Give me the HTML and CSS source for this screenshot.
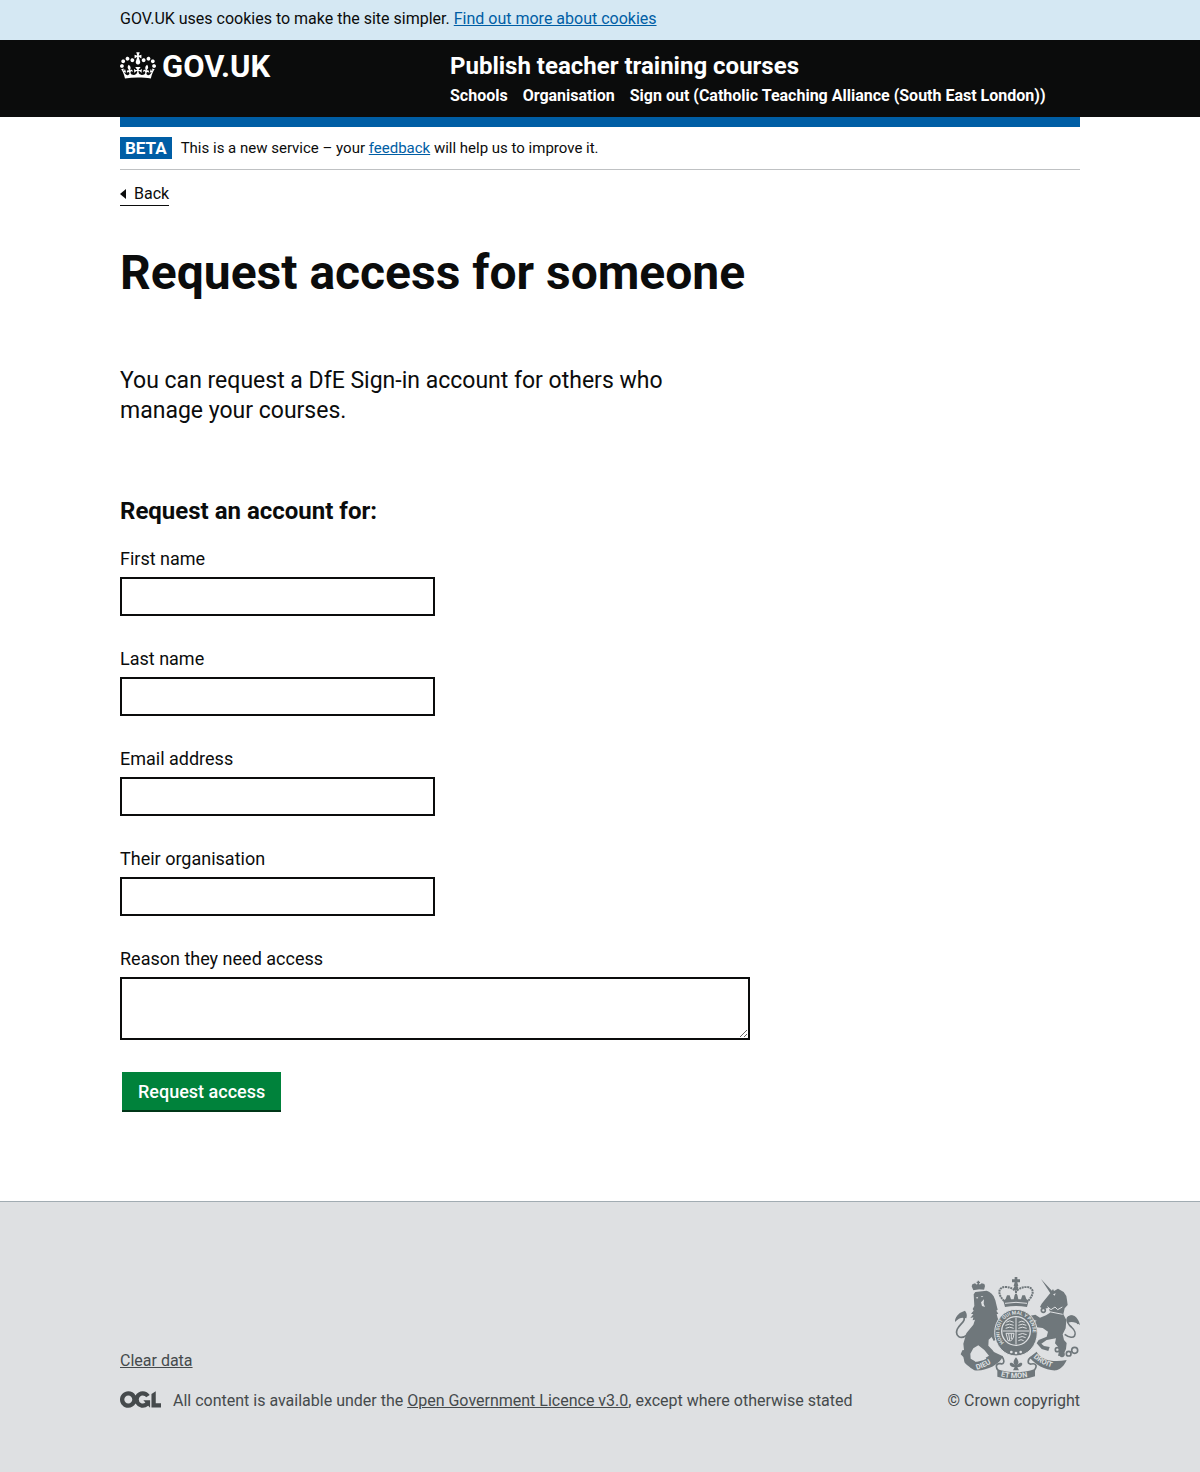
FILE: index.html
```html
<!DOCTYPE html>
<html lang="en">
<head>
<meta charset="utf-8">
<meta name="viewport" content="width=device-width, initial-scale=1">
<title>Request access for someone</title>
<link rel="stylesheet" href="styles.css">
</head>
<body>
<div class="cookie-banner">
  <p class="container">GOV.UK uses cookies to make the site simpler. <a class="link" href="#cookies">Find out more about cookies</a></p>
</div>
<header class="header">
  <div class="container header-grid">
    <a class="logo" href="#home">
      <svg class="crown" viewBox="0 0 132 97" aria-hidden="true"><path fill="currentColor" fill-rule="evenodd" d="M25 30.2c3.5 1.5 7.7-.2 9.1-3.7 1.5-3.6-.2-7.8-3.9-9.2-3.6-1.4-7.6.3-9.1 3.9-1.4 3.5.3 7.5 3.9 9zM9 39.5c3.6 1.5 7.8-.2 9.2-3.7 1.5-3.6-.2-7.8-3.9-9.1-3.6-1.5-7.6.2-9.1 3.8-1.4 3.5.3 7.5 3.8 9zM4.4 57.2c3.5 1.5 7.7-.2 9.1-3.8 1.5-3.6-.2-7.7-3.9-9.1-3.5-1.5-7.6.3-9.1 3.8-1.4 3.5.3 7.6 3.9 9.1zm38.3-21.4c3.5 1.5 7.7-.2 9.1-3.8 1.5-3.6-.2-7.7-3.9-9.1-3.6-1.5-7.6.3-9.1 3.8-1.3 3.6.4 7.7 3.9 9.1zm64.4-5.6c-3.6 1.5-7.8-.2-9.1-3.7-1.5-3.6.2-7.8 3.8-9.2 3.6-1.4 7.7.3 9.2 3.9 1.3 3.5-.4 7.5-3.9 9zm15.9 9.3c-3.6 1.5-7.7-.2-9.1-3.7-1.5-3.6.2-7.8 3.7-9.1 3.6-1.5 7.7.2 9.2 3.8 1.5 3.5-.3 7.5-3.8 9zm4.7 17.7c-3.6 1.5-7.8-.2-9.2-3.8-1.5-3.6.2-7.7 3.9-9.1 3.6-1.5 7.7.3 9.2 3.8 1.3 3.5-.4 7.6-3.9 9.1zM89.3 35.8c-3.6 1.5-7.8-.2-9.2-3.8-1.4-3.6.2-7.7 3.9-9.1 3.6-1.5 7.7.3 9.2 3.8 1.4 3.6-.3 7.7-3.9 9.1zM69.7 17.7l8.9 4.7V9.3l-8.9 2.8c-.2-.3-.5-.6-.9-.9L72.4 0H59.6l3.5 11.2c-.3.3-.6.5-.9.9l-8.8-2.8v13.1l8.8-4.7c.3.3.6.7.9.9l-5 15.4v.1c-.2.8-.4 1.6-.4 2.4 0 4.1 3.1 7.5 7 8.1h.2c.3 0 .7.1 1 .1.4 0 .7 0 1-.1h.2c4-.6 7.1-4.1 7.1-8.1 0-.8-.1-1.7-.4-2.4V34l-5.1-15.4c.4-.2.7-.6 1-.9zM66 92.8c16.9 0 32.8 1.1 47.1 3.2 4-16.9 8.9-26.7 14-33.5l-9.6-3.4c1 4.9 1.1 7.2 0 10.2-1.5-1.4-3-4.3-4.2-8.7L108.6 76c2.8-2 5-3.2 7.5-3.3-4.4 9.4-10 11.9-13.6 11.2-4.3-.8-6.3-4.6-5.6-7.9 1-4.7 5.7-5.9 8-.5 4.3-8.7-3-11.4-7.6-8.8 7.1-7.2 7.9-13.5 2.1-21.1-8 6.1-8.1 12.3-4.5 20.8-4.7-5.4-12.1-2.5-9.5 6.2 3.4-5.2 7.9-2 7.2 3.1-.6 4.3-6.4 7.8-13.5 7.2-10.3-.9-10.9-8-11.2-13.8 2.5-.5 7.1 1.8 11 7.3L80.2 60c-4.1 4.4-8 5.3-12.3 5.4 1.4-4.4 8-11.6 8-11.6H55.5s6.4 7.2 7.9 11.6c-4.2-.1-8-1-12.3-5.4l1.4 16.4c3.9-5.5 8.5-7.7 10.9-7.3-.3 5.8-.9 12.8-11.1 13.8-7.2.6-12.9-2.9-13.5-7.2-.7-5 3.8-8.3 7.1-3.1 2.7-8.7-4.6-11.6-9.4-6.2 3.7-8.5 3.6-14.7-4.6-20.8-5.8 7.6-5 13.9 2.2 21.1-4.7-2.6-11.9.1-7.7 8.8 2.3-5.5 7.1-4.2 8.1.5.7 3.3-1.3 7.1-5.7 7.9-3.5.7-9-1.8-13.5-11.2 2.5.1 4.7 1.3 7.5 3.3l-4.7-15.4c-1.2 4.4-2.7 7.2-4.3 8.7-1.1-3-.9-5.3 0-10.2l-9.5 3.4c5 6.9 9.9 16.7 14 33.5 14.8-2.1 30.8-3.2 47.7-3.2z"/></svg>
      <span>GOV.UK</span>
    </a>
    <div>
      <a class="service-name" href="#service">Publish teacher training courses</a>
      <nav class="nav" aria-label="Service">
        <a href="#schools">Schools</a>
        <a href="#organisation">Organisation</a>
        <a href="#sign-out">Sign out (Catholic Teaching Alliance (South East London))</a>
      </nav>
    </div>
  </div>
</header>
<div class="container">
  <div class="phase-banner">
    <strong class="tag">BETA</strong>
    <span>This is a new service – your <a class="link" href="#feedback">feedback</a> will help us to improve it.</span>
  </div>
  <a class="back-link" href="#back">Back</a>
  <main class="main">
    <h1>Request access for someone</h1>
    <p class="lead">You can request a DfE Sign-in account for others who manage your courses.</p>
    <form>
      <h2>Request an account for:</h2>
      <div class="field"><label for="first-name">First name</label><input id="first-name" type="text"></div>
      <div class="field"><label for="last-name">Last name</label><input id="last-name" type="text"></div>
      <div class="field"><label for="email">Email address</label><input id="email" type="email"></div>
      <div class="field"><label for="organisation">Their organisation</label><input id="organisation" type="text"></div>
      <div class="field"><label for="reason">Reason they need access</label><textarea id="reason" rows="2"></textarea></div>
      <button class="button" type="button">Request access</button>
    </form>
  </main>
</div>
<footer class="footer">
  <div class="container footer-row">
    <div class="footer-meta">
      <a href="#clear">Clear data</a>
      <div class="licence">
        <svg class="ogl" viewBox="0 0 483.2 195.7" aria-hidden="true"><path fill="currentColor" d="M421.5 142.8V.1l-50.7 32.3v161.1h112.4v-50.7zm-122.3-9.6A47.12 47.12 0 0 1 221 97.8c0-26 21.1-47.1 47.1-47.1 16.7 0 31.4 8.7 39.7 21.8l42.7-27.2A97.63 97.63 0 0 0 268.1 0c-36.5 0-68.3 20.1-85.1 49.7A98 98 0 0 0 97.8 0C43.9 0 0 43.9 0 97.8s43.9 97.8 97.8 97.8c36.5 0 68.3-20.1 85.1-49.7a97.76 97.76 0 0 0 149.6 25.4l19.4 22.2h3v-87.8h-80l24.3 27.5zM97.8 145c-26 0-47.1-21.1-47.1-47.1s21.1-47.1 47.1-47.1 47.1 21.1 47.1 47.1S123.8 145 97.8 145"/></svg>
        <span>All content is available under the <a href="#licence">Open Government Licence v3.0</a>, except where otherwise stated</span>
      </div>
    </div>
    <a class="copyright" href="#crown">
      <svg class="arms" viewBox="45 36 375 306" aria-hidden="true">
        <defs>
          <path id="garter" d="M192 233A50 50 0 1 1 264 233"/>
          <path id="dieu" d="M110 314Q146 305 176 277"/>
          <path id="mon" d="M182 334Q228 346 284 331"/>
          <path id="droit" d="M280 277Q310 306 360 312"/>
        </defs>
        <!-- lion -->
        <g class="ink">
          <path d="M100 76l-5-12 2-6 8-3 6 4 2-5h-3v-4h3v-3h4v3h3v4h-3l2 5 6-4 8 2 2 6-3 12q-17-3-32 1z"/>
          <path d="M101 88l5-7 34-4 7 3 8 6 6 8 5 12 4 16 3 12-4 3 6 9-5 2 3 11 6 16 6 4-3 8 3 12-7 19-17 10-6-12-9 8-1 18 13 14 10 14 9 5-3 10-31 1-6-8 10-6-14-17-18-14-15 9-9 16 1 15 13 8-2 9-21 3-8-8-4-17-8-8 5-12 5-1-2-19 9-31 21-26 5-15-7 2 2-9-9 2 9-11-7-2 8-9-3-5 5-9z"/>
        </g>
        <path class="line" d="M82 209c-21 18-38 3-30-17 8-16 28-24 18-38-5-7-14-2-20 6"/>
        <path class="ink" d="M44 172c2-19 14-30 31-35 5 7 7 13 4 23-12-5-24-1-35 12z"/>
        <path class="cut" d="M107 98l8-3-3 6zM122 94l8-1-4 4zM123 112l9-9-1 13 4 10-9-3z"/>
        <path class="cut-line thin" d="M100 78q18-4 34-3"/>
        <!-- unicorn -->
        <g class="ink">
          <path d="M303 42l36 39-7 5zM331 84l8-12 3 6 12-7 17 10 8 12 2 12 2 15-9 10-4 18 9 17-2 25-9 18 4 17 8 9-2 18-10 22-14-2 5-21-14-16 3-15-28 5-16 11 8 7 17 3-4 12-20-6-15-17 6-10 24-10 4-15-16-11-18-2-10-13 10-7-19-4-12 8-3-9 12-9 18-4 14 9 18-7 12-8-3-15-17 4-10-6 5-10z"/>
        </g>
        <path class="line" d="M374 208c30 22 42-2 20-22-18-15-16-35 2-32 9 3 14 12 18 23"/>
        <path class="ink" d="M382 160c8-16 30-11 38 20-14-10-27-10-36-7z"/>
        <path class="cut-line" d="M322 125l11 9 12-8 8 8 14-8M318 138l50 10"/>
        <path class="cut" d="M339 88l8-3-3 7z"/>
        <g class="line"><circle cx="352" cy="254" r="6"/><circle cx="366" cy="268" r="6"/><circle cx="386" cy="266" r="7"/><circle cx="404" cy="256" r="9"/><circle cx="365" cy="241" r="5"/><circle cx="310" cy="136" r="6"/></g>
        <!-- garter and shield -->
        <ellipse class="ink halo" cx="228" cy="203" rx="64" ry="70"/>
        <circle class="cut" cx="228" cy="198" r="45"/>
        <circle class="ink" cx="228" cy="198" r="41"/>
        <path class="cut-line" d="M228 158v80M188 198h80"/>
        <path class="cut-line" d="M199 172q10-9 22 0M196 181q12-7 25 0M197 190q12-7 24 0M236 172q10-7 18 0M235 181q12-7 24 0M235 190q12-7 25 0M198 205l6 22q16 5 18-22zM206 206l3 20M214 206v16M235 209q13-7 25 0M235 218q12-7 22 0M235 227q8-6 16 0"/>
        <circle class="cut" cx="214" cy="261" r="4"/><circle class="cut" cx="228" cy="264" r="4"/><circle class="cut" cx="242" cy="261" r="4"/>
        <text class="motto"><textPath href="#garter">HONI SOIT QUI MAL Y PENSE</textPath></text>
        <!-- crown -->
        <path class="cut" d="M188 106h80v22h-80z"/>
        <path class="line dotted" d="M192 108c-23-24-15-43 5-42 18 0 26 10 31 12 5-2 13-12 31-12 20-1 28 18 5 42M228 78v25"/>
        <path class="ink" d="M224 36h8v7h8v9h-8l3 11h-14l3-11h-8v-9h8zM190 107l7-5 4-11h8l4 12h8l3-14h8l3 14h8l4-12h8l4 11 7 5-5 19q-33-6-66 0z"/>
        <circle class="ink" cx="228" cy="69" r="7"/>
        <path class="cut-line" d="M195 115q33-6 66 0"/>
        <!-- ribbon -->
        <path class="ink" d="M72 286c42 12 76-3 88-26l29 14c-12 27-53 46-86 42-16-9-24-18-31-30zM290 260c9 22 45 34 90 25-7 17-18 27-31 31-31 2-64-16-80-39zM172 313c37 12 76 12 113-1v22c-37 12-76 12-113 1z"/>
        <path class="line" d="M185 274c10 10 8 26-3 22-11-2-18 6-8 20M274 277c-12 5-13 22 0 20 14-3 19 5 9 19"/>
        <path class="ink" d="M228 277c13 16 5 21 3 23 18-17 21 3 7 6l-6 1 5 9h-18l5-9-6-1c-14-3-11-23 7-6-2-2-10-7 3-23z"/>
        <text class="scroll"><textPath href="#dieu">DIEU</textPath></text>
        <text class="scroll"><textPath href="#mon">ET MON</textPath></text>
        <text class="scroll"><textPath href="#droit">DROIT</textPath></text>
      </svg>
      <span>© Crown copyright</span>
    </a>
  </div>
</footer>
</body>
</html>
```
FILE: styles.css
```css
* { box-sizing: border-box; }
body {
  margin: 0;
  background: #fff;
  color: #0b0c0c;
  font: 16px/20px Roboto, "Liberation Sans", sans-serif;
}
h1, h2, p { margin: 0; }
.container { max-width: 960px; margin: 0 auto; }
.link { color: #005ea5; }

.cookie-banner { background: #d5e8f3; padding: 9px 0 11px; }

.header { background: #0b0c0c; color: #fff; padding: 10px 0 11px; }
.header a { color: #fff; text-decoration: none; font-weight: 700; }
.header-grid { display: grid; grid-template-columns: 330px 1fr; }
.logo { display: flex; align-items: flex-start; gap: 6px; font-size: 31px; line-height: 34px; }
.crown { width: 36px; height: 27px; margin-top: 2px; }
.service-name { display: block; font-size: 24px; line-height: 32px; }
.nav { display: flex; gap: 15px; line-height: 20px; padding-top: 4px; }

.phase-banner {
  display: flex;
  align-items: center;
  gap: 9px;
  border-top: 10px solid #005ea5;
  border-bottom: 1px solid #bfc1c3;
  padding: 10px 0;
  font-size: 15px;
}
.tag { background: #005ea5; color: #fff; padding: 1px 5px; font-size: 17px; }

.back-link {
  display: inline-flex;
  align-items: center;
  gap: 8px;
  margin-top: 14px;
  border-bottom: 1px solid #0b0c0c;
  padding-bottom: 1px;
  color: #0b0c0c;
  text-decoration: none;
}
.back-link::before {
  content: "";
  border: 5px solid transparent;
  border-right: 6px solid #0b0c0c;
  border-left: 0;
}

.main { max-width: 630px; padding: 42px 0 89px; }
h1 { font-size: 48px; line-height: 50px; }
.lead { font-size: 23px; line-height: 30px; margin: 68px 0 70px; padding-right: 60px; }
h2 { font-size: 24px; line-height: 30px; margin-bottom: 20px; }
.field { margin-bottom: 30px; font-size: 18px; }
.field label { display: block; line-height: 25px; margin-bottom: 6px; }
.field input, .field textarea {
  display: block;
  border: 2px solid #0b0c0c;
  border-radius: 0;
  background: #fff;
  padding: 4px;
  font: inherit;
}
.field input { width: 50%; height: 39px; }
.field textarea { width: 100%; height: 63px; resize: vertical; }
.button {
  margin: 2px;
  border: 0;
  background: #00823b;
  box-shadow: 0 2px 0 #003618;
  color: #fff;
  padding: 7px 16px 6px;
  font: 500 18px/25px Roboto, "Liberation Sans", sans-serif;
}

.footer {
  border-top: 1px solid #a1acb2;
  background: #dee0e2;
  color: #454a4c;
  padding: 75px 0 61px;
}
.footer a { color: #454a4c; }
.footer-row { display: flex; justify-content: space-between; align-items: flex-end; }
.footer-meta { display: grid; gap: 20px; justify-items: start; }
.licence { display: flex; gap: 12px; align-items: flex-start; }
.ogl { width: 41px; height: 17px; }
.footer .copyright { display: grid; justify-items: end; gap: 12px; text-decoration: none; }
.arms { width: 125px; height: 102px; }

.ink { fill: #6f777b; }
.halo { stroke: #dee0e2; stroke-width: 3px; }
.cut { fill: #dee0e2; }
.line { fill: none; stroke: #6f777b; stroke-width: 5px; }
.dotted { stroke-width: 6px; stroke-dasharray: 6px 2px; }
.cut-line { fill: none; stroke: #dee0e2; stroke-width: 3px; }
.thin { stroke-width: 2px; }
.motto, .scroll { fill: #dee0e2; font-weight: 700; }
.motto { font-size: 15px; }
.scroll { font-size: 22px; }
```
